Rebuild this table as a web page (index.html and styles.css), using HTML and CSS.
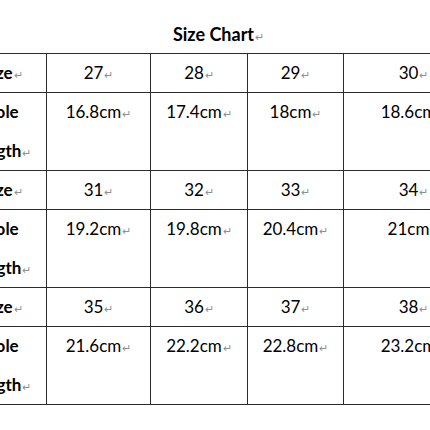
FILE: index.html
```html
<!DOCTYPE html>
<html>
<head>
<meta charset="utf-8">
<link rel="stylesheet" href="styles.css">
</head>
<body>
<div class="sheet">
  <div class="title">Size Chart<span class="pm">↵</span></div>
  <table class="chart">
    <colgroup>
      <col class="c-label"><col class="c-a"><col class="c-b"><col class="c-c"><col class="c-d">
    </colgroup>
    <tbody>
      <tr class="r-size"><th>Size<span class="pm">↵</span></th><td>27<span class="pm">↵</span></td><td>28<span class="pm">↵</span></td><td>29<span class="pm">↵</span></td><td>30<span class="pm">↵</span></td></tr>
      <tr class="r-len"><th>Sole<br>length<span class="pm">↵</span></th><td>16.8cm<span class="pm">↵</span></td><td>17.4cm<span class="pm">↵</span></td><td>18cm<span class="pm">↵</span></td><td>18.6cm<span class="pm">↵</span></td></tr>
      <tr class="r-size"><th>Size<span class="pm">↵</span></th><td>31<span class="pm">↵</span></td><td>32<span class="pm">↵</span></td><td>33<span class="pm">↵</span></td><td>34<span class="pm">↵</span></td></tr>
      <tr class="r-len"><th>Sole<br>length<span class="pm">↵</span></th><td>19.2cm<span class="pm">↵</span></td><td>19.8cm<span class="pm">↵</span></td><td>20.4cm<span class="pm">↵</span></td><td>21cm<span class="pm">↵</span></td></tr>
      <tr class="r-size"><th>Size<span class="pm">↵</span></th><td>35<span class="pm">↵</span></td><td>36<span class="pm">↵</span></td><td>37<span class="pm">↵</span></td><td>38<span class="pm">↵</span></td></tr>
      <tr class="r-len"><th>Sole<br>length<span class="pm">↵</span></th><td>21.6cm<span class="pm">↵</span></td><td>22.2cm<span class="pm">↵</span></td><td>22.8cm<span class="pm">↵</span></td><td>23.2cm<span class="pm">↵</span></td></tr>
    </tbody>
  </table>
</div>
</body>
</html>
```
FILE: styles.css
```css
html, body {
  margin: 0;
  padding: 0;
  background: #ffffff;
  overflow: hidden;
}
body {
  font-family: Lato, "Open Sans", "Liberation Sans", sans-serif;
  color: #000000;
}
.sheet {
  width: 525px;
  margin-left: -44px;
}
.title {
  padding-top: 22px;
  line-height: 24px;
  margin-bottom: 7px;
  font-size: 18px;
  font-weight: 700;
  text-align: center;
}
.pm {
  font-size: 11px;
  line-height: 0;
  font-weight: 400;
  color: #8f8f8f;
  margin-left: 1px;
}
.chart {
  border-collapse: collapse;
  table-layout: fixed;
  width: 525px;
  font-size: 17px;
  line-height: 38.5px;
  margin-left: 2px;
}
.r-size {
  line-height: 38px;
}
.c-label { width: 88px; }
.c-a { width: 104px; }
.c-b { width: 97px; }
.c-c { width: 96px; }
.c-d { width: 140px; }
.chart th,
.chart td {
  border: 1px solid #2b2b2b;
  padding: 0;
  text-align: center;
  vertical-align: top;
  white-space: nowrap;
}
.chart th {
  font-weight: 700;
}
```
